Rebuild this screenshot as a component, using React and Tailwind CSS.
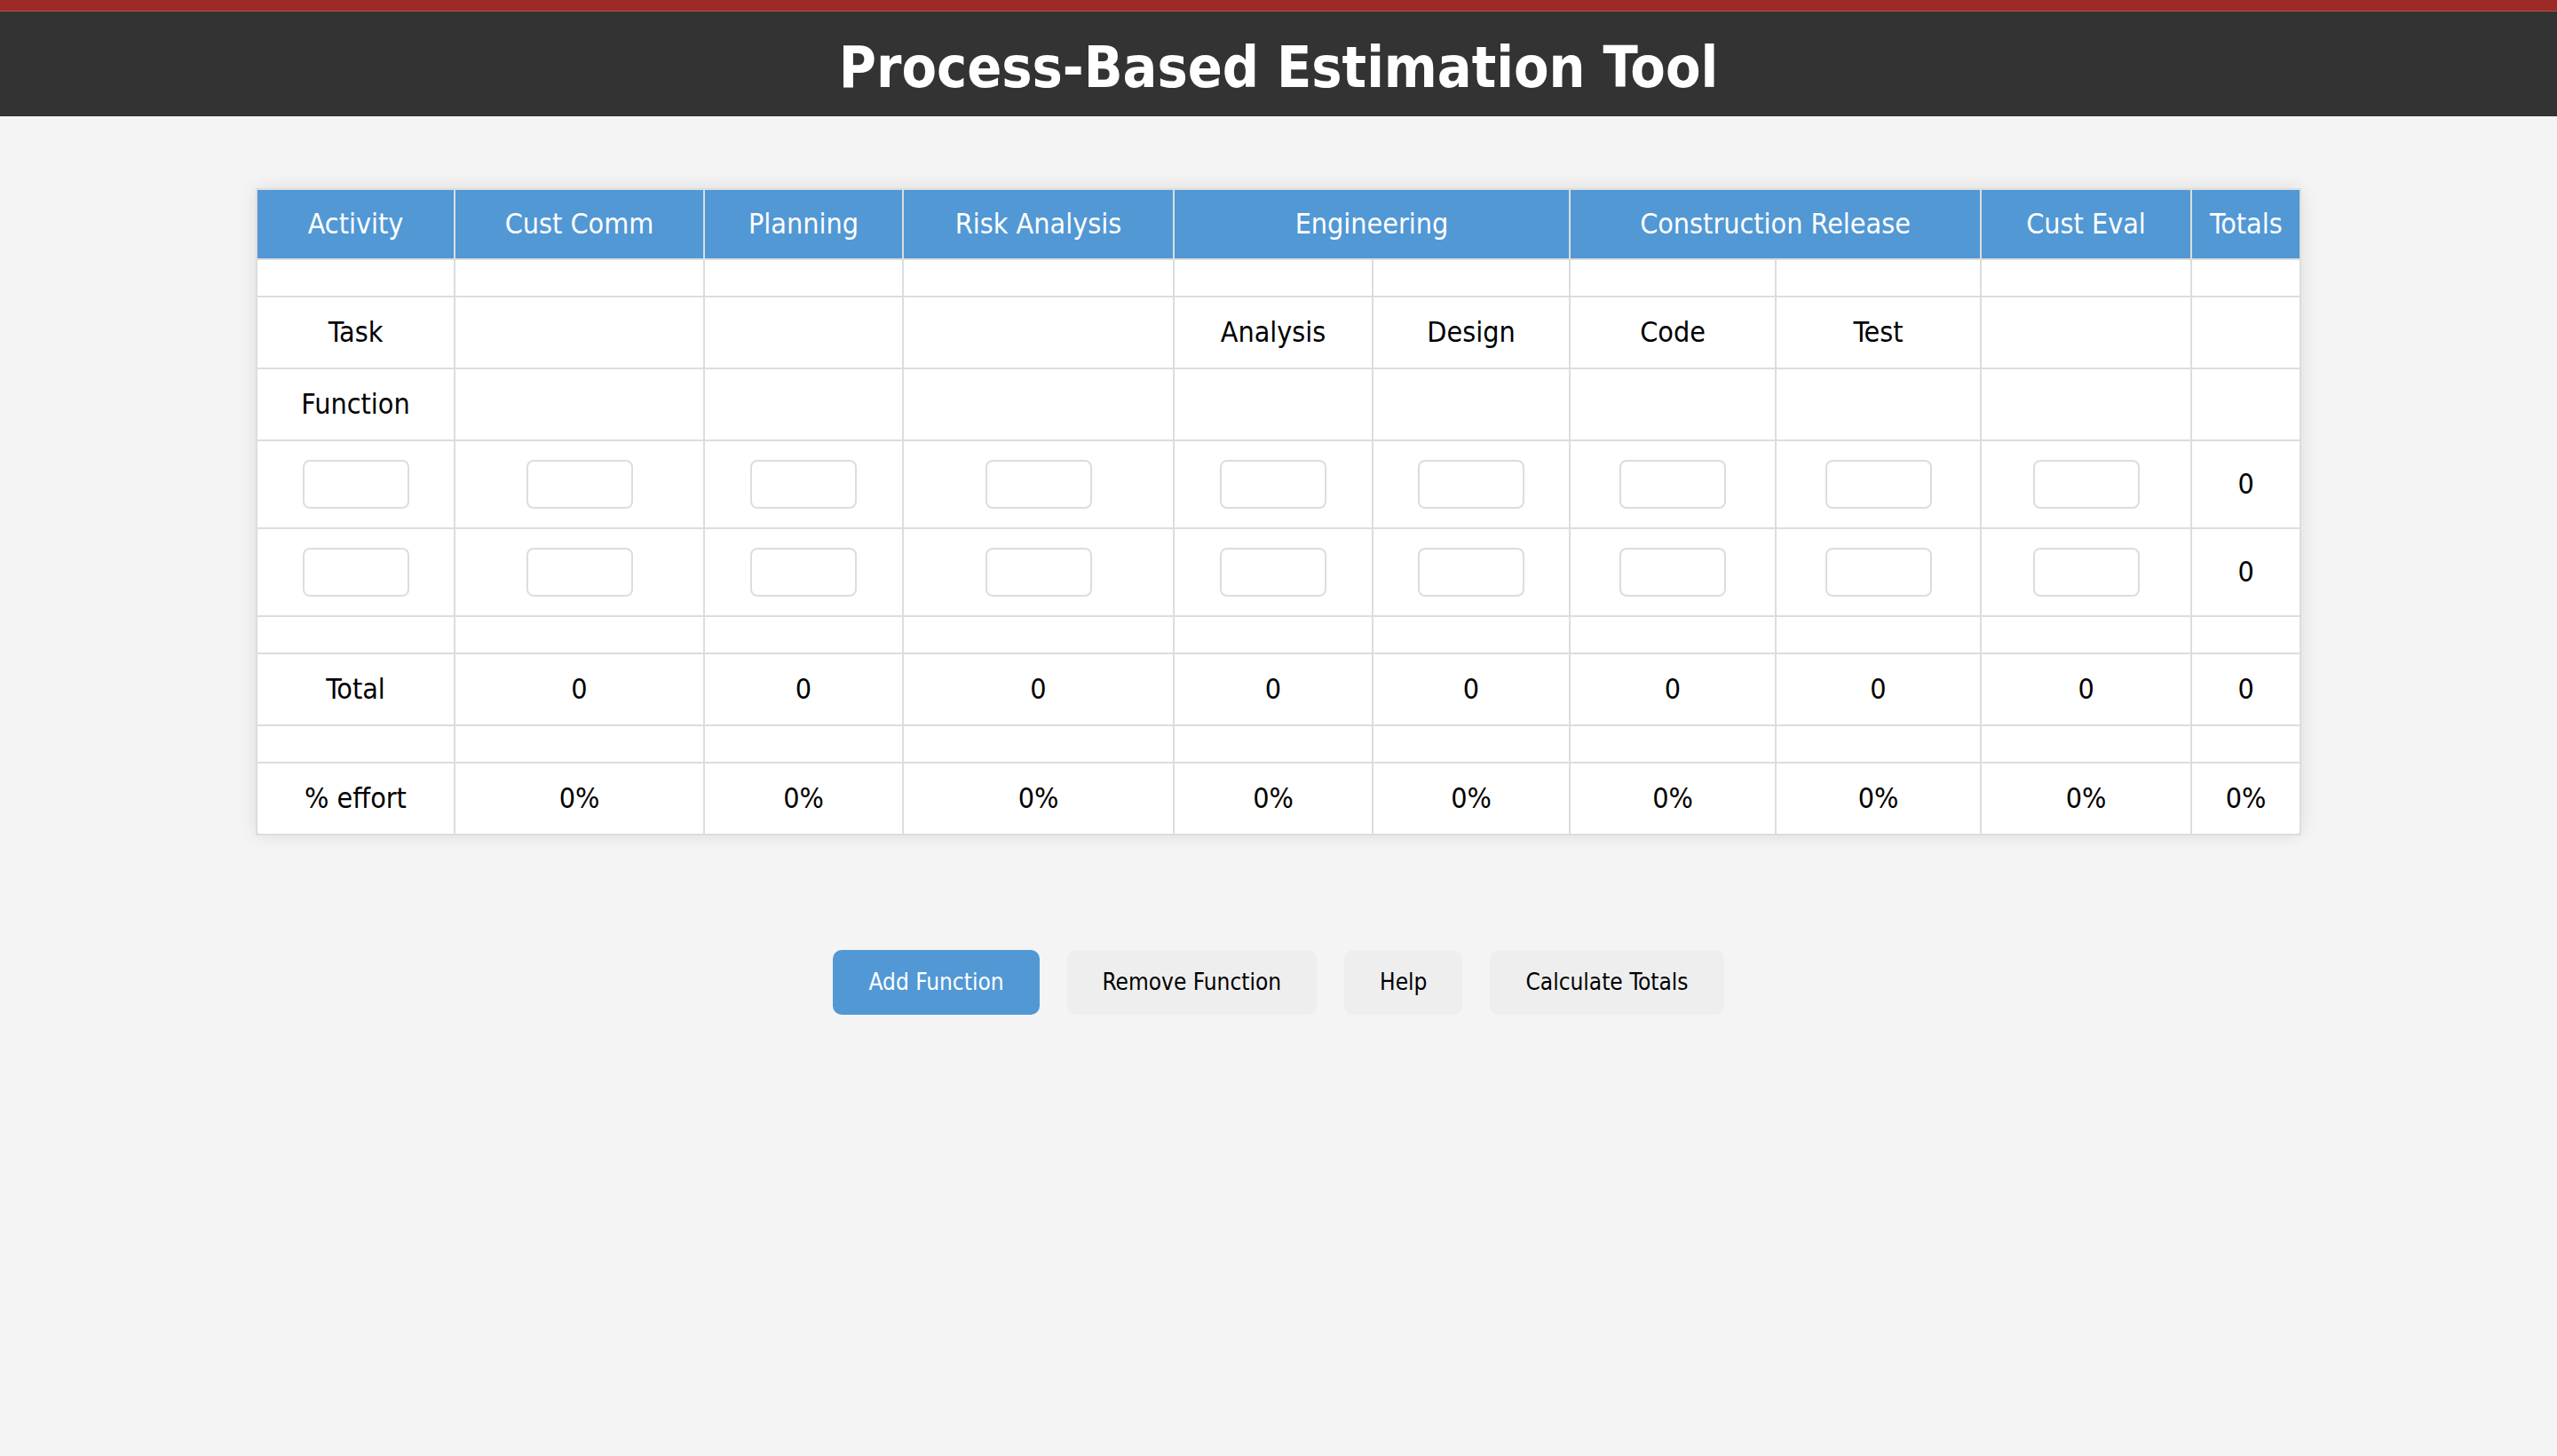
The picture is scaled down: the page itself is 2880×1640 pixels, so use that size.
import React, { useState } from 'react';

const COLS = ['w-[223px]', 'w-[281px]', 'w-[224px]', 'w-[305px]', 'w-[224px]', 'w-[222px]', 'w-[232px]', 'w-[231px]', 'w-[237px]', 'w-[123px]'];

const HEADERS = [
  { label: 'Activity' },
  { label: 'Cust Comm' },
  { label: 'Planning' },
  { label: 'Risk Analysis' },
  { label: 'Engineering', span: 2 },
  { label: 'Construction Release', span: 2 },
  { label: 'Cust Eval' },
  { label: 'Totals' },
];

const TASKS = ['Task', '', '', '', 'Analysis', 'Design', 'Code', 'Test', '', ''];

const cell = 'border-2 border-[#ddd] p-[20px] text-center align-middle';

function EmptyRow() {
  return (
    <tr>
      {COLS.map((c, i) => (
        <td key={i} className={cell}></td>
      ))}
    </tr>
  );
}

export default function App() {
  const [rows, setRows] = useState([0, 1]);

  return (
    <div className="min-h-screen bg-[#f4f4f4] font-['DejaVu_Sans',sans-serif] font-stretch-condensed text-black">
      <div className="h-[12px] bg-[#9c2b27]" />
      <div className="h-px bg-[#b5514d]" />
      <header className="h-[118px] bg-[#333] pt-[26px] text-center">
        <h1 className="text-[64px] font-bold leading-[1.164] text-white">Process-Based Estimation Tool</h1>
      </header>

      <div className="mx-auto mt-[81px] w-[80%] rounded-[10px] bg-white shadow-[0_0_20px_rgba(0,0,0,0.1)]">
        <table className="w-full table-fixed border-collapse text-[32px] leading-[1.164]">
          <colgroup>
            {COLS.map((c, i) => (
              <col key={i} className={c} />
            ))}
          </colgroup>
          <thead>
            <tr>
              {HEADERS.map(h => (
                <th key={h.label} colSpan={h.span || 1} className={`${cell} bg-[#5198d5] font-normal text-white`}>
                  {h.label}
                </th>
              ))}
            </tr>
          </thead>
          <tbody className="leading-[39px]">
            <EmptyRow />
            <tr>
              {TASKS.map((t, i) => (
                <td key={i} className={cell}>{t}</td>
              ))}
            </tr>
            <tr>
              <td className={cell}>Function</td>
              {COLS.slice(1).map((c, i) => (
                <td key={i} className={cell}></td>
              ))}
            </tr>
            {rows.map(r => (
              <tr key={r}>
                {COLS.slice(0, 9).map((c, i) => (
                  <td key={i} className={`${cell} py-[21px]`}>
                    <input
                      type="text"
                      className="mx-auto block h-[55px] w-[120px] rounded-[8px] border-2 border-[#ddd] bg-white"
                    />
                  </td>
                ))}
                <td className={cell}>0</td>
              </tr>
            ))}
            <EmptyRow />
            <tr>
              <td className={cell}>Total</td>
              {COLS.slice(1).map((c, i) => (
                <td key={i} className={cell}>0</td>
              ))}
            </tr>
            <EmptyRow />
            <tr>
              <td className={cell}>% effort</td>
              {COLS.slice(1).map((c, i) => (
                <td key={i} className={cell}>0%</td>
              ))}
            </tr>
          </tbody>
        </table>
      </div>

      <div className="mt-[129px] flex justify-center gap-[31px] text-[26px] leading-[31px]">
        <button
          type="button"
          onClick={() => setRows(v => [...v, v.length ? v[v.length - 1] + 1 : 0])}
          className="rounded-[10px] bg-[#5198d5] px-[40px] py-[21px] text-white"
        >
          Add Function
        </button>
        <button
          type="button"
          onClick={() => setRows(v => v.slice(0, -1))}
          className="rounded-[10px] bg-[#eee] px-[40px] py-[21px]"
        >
          Remove Function
        </button>
        <button type="button" className="rounded-[10px] bg-[#eee] px-[40px] py-[21px]">
          Help
        </button>
        <button type="button" className="rounded-[10px] bg-[#eee] px-[40px] py-[21px]">
          Calculate Totals
        </button>
      </div>
    </div>
  );
}
